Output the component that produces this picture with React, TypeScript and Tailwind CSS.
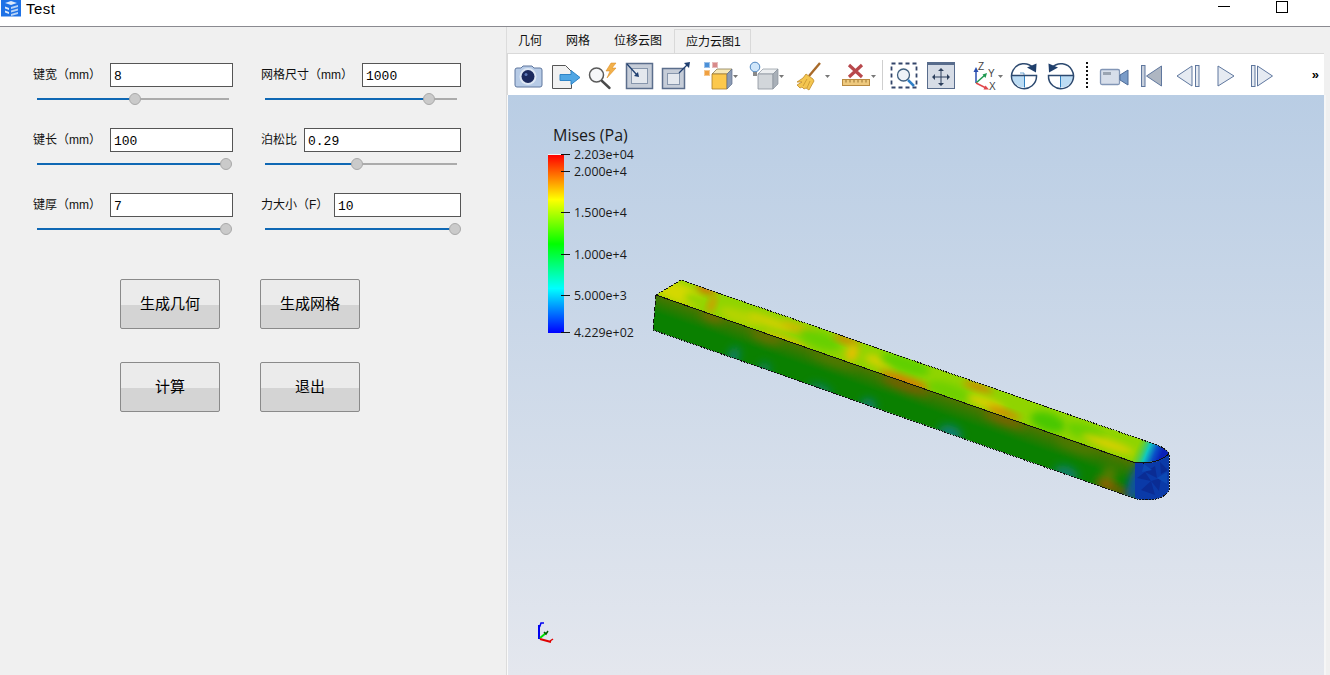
import React from "react";

const cjk = "font-['Liberation_Sans','Noto_Sans_CJK_SC',sans-serif]";

const fields = [
  [
    { label: "键宽（mm）", value: "8", pos: 51, inputW: "w-[123px]" },
    { label: "键长（mm）", value: "100", pos: 98.5, inputW: "w-[123px]" },
    { label: "键厚（mm）", value: "7", pos: 98.5, inputW: "w-[123px]" },
  ],
  [
    { label: "网格尺寸（mm）", value: "1000", pos: 85.5, inputW: "w-[99px]" },
    { label: "泊松比", value: "0.29", pos: 48, inputW: "w-[157px]" },
    { label: "力大小（F）", value: "10", pos: 99, inputW: "w-[127px]" },
  ],
];

const Field = ({ label, value, pos, inputW }: { label: string; value: string; pos: number; inputW: string }) => (
  <div className="h-[65px]">
    <div className="flex h-[24px] items-center justify-between">
      <span className={`${cjk} whitespace-nowrap text-[12px] text-[#111]`}>{label}</span>
      <div className={`${inputW} flex h-[24px] items-center border border-[#555] bg-white pl-[3px] pt-[4px] font-['Liberation_Mono',monospace] text-[13px] text-black`}>
        {value}
      </div>
    </div>
    <div className="mx-[4px] mt-[6px] flex h-[12px] w-[192px] items-center">
      <div className="h-[2px] bg-[#0f68b4]" style={{ width: `${pos}%` }} />
      <div className="-mx-[6px] z-10 h-[12px] w-[12px] shrink-0 rounded-full border border-[#a9a9a9] bg-[#cacaca]" />
      <div className="h-[2px] flex-1 bg-[#ababab]" />
    </div>
  </div>
);

const PushButton = ({ text }: { text: string }) => (
  <button className={`${cjk} h-[50px] w-[100px] rounded-[2px] border border-[#8a8a8a] bg-[linear-gradient(#ebebeb_0%,#ebebeb_52%,#d4d4d4_52%,#d4d4d4_100%)] text-[15px] text-black`}>
    {text}
  </button>
);

// icon drawn in screen coordinates, the svg itself sits in the toolbar flow
const Tool = ({ x, w, children }: { x: number; w: number; children: React.ReactNode }) => (
  <svg width={w} height={42} viewBox={`${x} 53 ${w} 42`} className="shrink-0">
    {children}
  </svg>
);

const Drop = ({ x, y }: { x: number; y: number }) => (
  <path d={`M${x} ${y}h5l-2.5 3z`} fill="#777" />
);

const Toolbar = () => (
  <div className="flex h-[42px] w-[817px] items-center border-l border-t border-[#d9d9d9] bg-white pl-[1px]">
    <Tool x={509} w={38}>
      <path d="M515 69a2 2 0 0 1 2-2h4l2-2h9l2 2h6a2 2 0 0 1 2 2v15a2 2 0 0 1-2 2h-23a2 2 0 0 1-2-2z" fill="#b7cbe6" stroke="#5f779e" />
      <circle cx="528" cy="75.500" r="8.500" fill="#dfe8f4" />
      <circle cx="528" cy="75.500" r="6.500" fill="#1c2a5e" />
      <circle cx="526" cy="73.500" r="1.500" fill="#5f7ab8" />
    </Tool>
    <Tool x={547} w={36}>
      <path d="M552.500 64.500h13l6 6v17h-19z" fill="#f1f1f1" stroke="#555" />
      <path d="M560 73.500h11v-4l9 7-9 7v-4h-11z" fill="#4fa6e4" stroke="#2f84c6" />
    </Tool>
    <Tool x={583} w={37}>
      <circle cx="596.500" cy="74" r="7" fill="#f6f7f9" stroke="#5a5a5a" strokeWidth="1.500" />
      <path d="M602 80l7.500 7" stroke="#4a4a4a" strokeWidth="2.400" strokeLinecap="round" />
      <path d="M611 62l-5 8h4l-3 7 9-10h-4l4-5z" fill="#f2b04a" stroke="#d8861a" strokeWidth=".5" />
    </Tool>
    <Tool x={620} w={38}>
      <rect x="626.500" y="62.500" width="26" height="25" fill="#c6cdd8" stroke="#5b6e8c" strokeWidth="1.500" />
      <rect x="631.500" y="67.500" width="16" height="15" fill="#e4e8ee" stroke="#8796ac" />
      <path d="M627 63l10 11" stroke="#1f3f70" strokeWidth="1.300" />
      <path d="M639 76l-5-1 4-4z" fill="#1f3f70" />
    </Tool>
    <Tool x={658} w={37}>
      <rect x="662.500" y="67.500" width="22" height="20" fill="#c6cdd8" stroke="#5b6e8c" strokeWidth="1.500" />
      <rect x="667.500" y="72.500" width="12" height="11" fill="#e4e8ee" stroke="#8796ac" />
      <path d="M679 72l9-9" stroke="#1f3f70" strokeWidth="1.300" />
      <path d="M690 61l-1 6-5-5z" fill="#1f3f70" />
    </Tool>
    <Tool x={695} w={50}>
      <rect x="704.500" y="61.500" width="5" height="5" fill="#4a90d8" stroke="#9cc0e8" />
      <rect x="712.500" y="61.500" width="5" height="5" fill="#d88a8a" stroke="#e8bcbc" />
      <rect x="704.500" y="69.500" width="5" height="5" fill="#f0a040" stroke="#f5c890" />
      <path d="M717 68h15l-5 5h-15z" fill="#f6e8b8" stroke="#7a6a40" strokeWidth=".7" />
      <path d="M712 73h15v15h-15z" fill="#fcc84c" stroke="#a87c28" strokeWidth=".8" />
      <path d="M727 73l5-5v15l-5 5z" fill="#8a9ab4" stroke="#5f6f8a" strokeWidth=".7" />
      <Drop x={733} y={74} />
    </Tool>
    <Tool x={745} w={45}>
      <circle cx="755" cy="66" r="4.800" fill="#cfe6fa" stroke="#4f86c0" />
      <rect x="753" y="71" width="4" height="4" fill="#8a8a8a" />
      <path d="M763 68h15l-5 5h-15z" fill="#eceef0" stroke="#8a929c" strokeWidth=".7" />
      <path d="M758 73h15v15h-15z" fill="#d2d6da" stroke="#8a929c" strokeWidth=".8" />
      <path d="M773 73l5-5v15l-5 5z" fill="#a9b0b8" stroke="#8a929c" strokeWidth=".7" />
      <Drop x={779} y={74} />
    </Tool>
    <Tool x={790} w={46}>
      <path d="M820 62l-11 13" stroke="#a86a2a" strokeWidth="2.400" />
      <path d="M806 73l7 5 1 2-5 9-3-2-2 1-2-2-2 1-2-2-1-1 5-3-5 0 6-4z" fill="#f4c650" stroke="#c08c28" strokeWidth=".8" />
      <path d="M807 78l-4 7M810 80l-3 7" stroke="#c08c28" strokeWidth=".7" />
      <Drop x={825} y={74} />
    </Tool>
    <Tool x={836} w={44}>
      <path d="M849 64l13 12M862 64l-13 12" stroke="#b8484c" strokeWidth="3.200" />
      <rect x="842.500" y="78.500" width="27" height="6" fill="#eec97e" stroke="#b88a40" />
      <path d="M846 79v2.500M850 79v2.500M854 79v2.500M858 79v2.500M862 79v2.500M866 79v2.500" stroke="#9a7430" />
      <Drop x={871} y={74} />
    </Tool>
    <div className="mx-[1.500px] h-[30px] w-[1px] shrink-0 bg-[#cfcfcf]" />
    <Tool x={884} w={39}>
      <rect x="891.500" y="62.500" width="25" height="24" fill="none" stroke="#33456a" strokeWidth="1.800" strokeDasharray="4 3" />
      <circle cx="903.500" cy="74" r="6" fill="#eef3f8" stroke="#40607f" strokeWidth="1.300" />
      <path d="M908 79l6 6" stroke="#2f80c8" strokeWidth="2.500" />
    </Tool>
    <Tool x={923} w={36}>
      <rect x="927.500" y="61.500" width="27" height="26" fill="#d6dce6" stroke="#586c8c" />
      <rect x="927" y="61" width="28" height="3" fill="#586c8c" />
      <path d="M941 70v12M935 76h12" stroke="#2c3f5c" strokeWidth="1" />
      <path d="M941 67l3 3h-6zM941 85l3-3h-6zM932 76l3-3v6zM950 76l-3-3v6z" fill="#2c3f5c" />
    </Tool>
    <Tool x={959} w={47}>
      <path d="M976 82V69" stroke="#2a4fb0" strokeWidth="1.500" />
      <path d="M976 66l2.500 5h-5z" fill="#2a4fb0" />
      <path d="M976 82l9-8" stroke="#1f9a50" strokeWidth="1.500" />
      <path d="M987 72l-1.500 5-3-3.500z" fill="#1f9a50" />
      <path d="M976 82l10 5" stroke="#e0484c" strokeWidth="1.500" />
      <path d="M989 88.500l-5.500 0 2-4z" fill="#e0484c" />
      <text x="978" y="69" fontSize="10" fill="#444" fontFamily="Liberation Sans">Z</text>
      <text x="988" y="76" fontSize="10" fill="#444" fontFamily="Liberation Sans">Y</text>
      <text x="989" y="89" fontSize="10" fill="#444" fontFamily="Liberation Sans">X</text>
      <Drop x={998} y={74} />
    </Tool>
    <Tool x={1006} w={36}>
      <path d="M1012 74.500h12v12a12 12 0 0 1-12-12z" fill="#bcdcf4" />
      <path d="M1024.500 74.500v12" stroke="#2f80c0" strokeWidth="1" />
      <path d="M1020 72h4v3" stroke="#2f80c0" strokeWidth=".7" fill="none" />
      <path d="M1033 66.500a12.500 12.500 0 1 0 3.500 8h-25" fill="none" stroke="#2d4a70" strokeWidth="1.500" />
      <path d="M1036 71.500l-9-5 9.500-4z" fill="#1f3f6c" />
    </Tool>
    <Tool x={1042} w={37}>
      <path d="M1073 74.500h-12v12a12 12 0 0 0 12-12z" fill="#bcdcf4" />
      <path d="M1060.500 74.500v12" stroke="#2f80c0" strokeWidth="1" />
      <path d="M1052 66.500a12.500 12.500 0 1 1-3.500 8h25" fill="none" stroke="#2d4a70" strokeWidth="1.500" />
      <path d="M1049 71.500l9-5-9.500-4z" fill="#1f3f6c" />
    </Tool>
    <Tool x={1079} w={16}>
      <path d="M1087 61v26" stroke="#111" strokeWidth="2" strokeDasharray="2 2" />
    </Tool>
    <Tool x={1095} w={38}>
      <rect x="1100.500" y="68.500" width="19" height="15" rx="1.500" fill="#d7deea" stroke="#8296b6" strokeWidth="1.300" />
      <rect x="1103" y="71" width="8" height="3" fill="#9aa4b2" />
      <path d="M1120 74l8-5v15l-8-5z" fill="#7a9cc8" stroke="#4e6c98" />
    </Tool>
    <Tool x={1133} w={36}>
      <rect x="1141.500" y="64.500" width="3.500" height="21" fill="#c8d0dc" stroke="#5f779e" />
      <path d="M1161.500 65v20l-15-10z" fill="#aeb6c2" stroke="#5f779e" />
    </Tool>
    <Tool x={1169} w={38}>
      <path d="M1192 65v20l-15-10z" fill="#e6ebf2" stroke="#5f779e" />
      <rect x="1195.500" y="64.500" width="3.500" height="21" fill="#e6ebf2" stroke="#5f779e" />
    </Tool>
    <Tool x={1207} w={37}>
      <path d="M1218 65v20l16-10z" fill="#e6ebf2" stroke="#5f779e" />
    </Tool>
    <Tool x={1244} w={36}>
      <rect x="1251.500" y="64.500" width="3.500" height="21" fill="#e6ebf2" stroke="#5f779e" />
      <path d="M1257.500 65v20l15-10z" fill="#e6ebf2" stroke="#5f779e" />
    </Tool>
    <span className="ml-auto mr-[5px] font-['Liberation_Sans',sans-serif] text-[13px] font-bold leading-none text-black">»</span>
  </div>
);

const ticks = [
  { y: 154, label: "2.203e+04" },
  { y: 171, label: "2.000e+4" },
  { y: 212, label: "1.500e+4" },
  { y: 254, label: "1.000e+4" },
  { y: 295, label: "5.000e+3" },
  { y: 332, label: "4.229e+02" },
];

// blurred blobs over the beam faces: [cx, cy, rx, ry, colour]
const topBlobs: [number, number, number, number, string][] = [
  [678, 293, 26, 10, "#d4d800"],
  [696, 300, 12, 5, "#8ed400"],
  [706, 289, 10, 4, "#e06808"],
  [712, 304, 3, 10, "#e09000"],
  [740, 317, 22, 7, "#b4d400"],
  [770, 322, 24, 5, "#d0d000"],
  [785, 342, 26, 4, "#e0c000"],
  [800, 329, 20, 3, "#e4b000"],
  [820, 340, 22, 8, "#68d000"],
  [846, 340, 14, 3, "#e07800"],
  [852, 353, 6, 9, "#e4c000"],
  [880, 362, 16, 5, "#d8d000"],
  [905, 364, 26, 8, "#60d000"],
  [905, 381, 28, 4, "#e07000"],
  [950, 392, 24, 8, "#70d000"],
  [978, 387, 16, 3, "#e07800"],
  [986, 403, 20, 5, "#d8d000"],
  [1004, 413, 18, 3, "#e07800"],
  [1048, 422, 18, 9, "#48c800"],
  [1085, 432, 20, 7, "#68d000"],
  [1108, 444, 28, 4, "#e0d000"],
];

const frontBlobs: [number, number, number, number, string][] = [
  [712, 317, 12, 4, "#7a6a00"],
  [766, 337, 16, 5, "#6a7000"],
  [833, 361, 24, 3, "#5c7800"],
  [905, 386, 26, 3, "#9a5000"],
  [1004, 420, 22, 3, "#9a5800"],
  [1075, 447, 20, 3, "#587a00"],
  [1108, 478, 8, 12, "#587a00"],
  [1108, 486, 14, 2.500, "#d04000"],
  [1124, 493, 8, 2.500, "#d03000"],
  [733, 358, 6, 12, "#0a7e60"],
  [764, 370, 6, 8, "#0a7e58"],
  [820, 390, 12, 6, "#0a7e58"],
  [868, 406, 8, 8, "#0a7e68"],
  [950, 434, 12, 9, "#0a7e70"],
  [1066, 474, 12, 8, "#0a7e68"],
  [1136, 482, 7, 22, "#0a50a8"],
];

const Viewport = () => (
  <svg viewBox="508 95 816 580" className="h-full w-full">
    <defs>
      <linearGradient id="scale" x1="0" y1="0" x2="0" y2="1">
        <stop offset="0" stopColor="#ff0000" />
        <stop offset="0.25" stopColor="#ffff00" />
        <stop offset="0.5" stopColor="#00ff00" />
        <stop offset="0.75" stopColor="#00ffff" />
        <stop offset="1" stopColor="#0000ff" />
      </linearGradient>
      <filter id="soft" x="-60%" y="-60%" width="220%" height="220%">
        <feGaussianBlur stdDeviation="3.500" />
      </filter>
      <filter id="softer" x="-80%" y="-120%" width="260%" height="340%">
        <feGaussianBlur stdDeviation="4.500" />
      </filter>
      <clipPath id="topFace">
        <path d="M656 295L681 280L1157 445Q1167 449 1169 454Q1160 464 1133 462Z" />
      </clipPath>
      <clipPath id="frontFace">
        <path d="M656 295L1137 463L1137 499L653 330Z" />
      </clipPath>
      <linearGradient id="corner" gradientUnits="userSpaceOnUse" x1="1136" y1="448" x2="1160" y2="458">
        <stop offset="0" stopColor="#40c840" stopOpacity="0" />
        <stop offset="0.45" stopColor="#10c8c0" />
        <stop offset="0.75" stopColor="#0a50c8" />
        <stop offset="1" stopColor="#0a20b8" />
      </linearGradient>
      <linearGradient id="olive" gradientUnits="userSpaceOnUse" x1="800" y1="345" x2="789" y2="376">
        <stop offset="0" stopColor="#6a7000" stopOpacity=".7" />
        <stop offset="0.55" stopColor="#6a7000" stopOpacity="0" />
      </linearGradient>
    </defs>

    <text x="553" y="141" fontSize="16" fill="#1a1a1a" fontFamily="Open Sans, sans-serif">Mises (Pa)</text>
    <rect x="548" y="154" width="16" height="1" fill="#f4f4f4" />
    <rect x="548" y="155" width="16" height="178" fill="url(#scale)" />
    {ticks.map((t) => (
      <g key={t.y}>
        <rect x="561" y={t.y} width="9" height="1" fill="#111" />
        <text x="574" y={t.y + 4.500} fontSize="12.400" fill="#1a1a1a" fontFamily="Open Sans, sans-serif">{t.label}</text>
      </g>
    ))}

    {/* beam: top face */}
    <path d="M656 295L681 280L1157 445Q1167 449 1169 454Q1160 464 1133 462Z" fill="#90d400" />
    <g clipPath="url(#topFace)">
      {topBlobs.map(([cx, cy, rx, ry, c], i) => (
        <ellipse key={i} cx={cx} cy={cy} rx={rx} ry={ry} fill={c} filter="url(#soft)" transform={`rotate(19 ${cx} ${cy})`} />
      ))}
      <rect x="1125" y="440" width="46" height="26" fill="url(#corner)" />
    </g>
    {/* beam: front face */}
    <path d="M656 295L1137 463L1137 499L653 330Z" fill="#0a8000" />
    <path d="M656 295L1137 463L1137 499L653 330Z" fill="url(#olive)" />
    <g clipPath="url(#frontFace)">
      {frontBlobs.map(([cx, cy, rx, ry, c], i) => (
        <ellipse key={i} cx={cx} cy={cy} rx={rx} ry={ry} fill={c} filter="url(#softer)" transform={`rotate(19 ${cx} ${cy})`} />
      ))}
    </g>
    {/* beam: rounded end */}
    <path d="M1135 462Q1155 466 1169 454V490Q1165 499 1148 500Q1140 500 1135 498Z" fill="#0a3aa8" />
    <path d="M1137 478l8-6 6 9zM1145 472l10-6 2 12zM1151 481l10-3-2 13zM1141 490l10-9 4 14zM1160 462l8 8-7 4z" fill="#0a2c94" />
    <path d="M1157 478l10-6v12zM1144 464l8 6-10 2z" fill="#0c48b4" />

    {/* outlines */}
    <g fill="none" stroke="#111" shapeRendering="crispEdges">
      <path d="M656 295L1133 462Q1155 466 1169 454" strokeWidth="1" />
      <path d="M656 295L681 280L1157 445Q1167 449 1169 454V490Q1165 499 1148 500Q1140 500 1133 498L653 330" strokeWidth="1" strokeDasharray="2 1" />
      <path d="M656 295L653 330" strokeWidth="1" strokeDasharray="4 2" />
    </g>

    {/* axes */}
    <path d="M539 639V625" stroke="#0000f0" strokeWidth="2" />
    <path d="M539 628l1-2 1-3h3" stroke="#0000f0" strokeWidth="1.500" fill="none" />
    <path d="M540 638l6-5" stroke="#00e000" strokeWidth="2" />
    <path d="M544 632l2 2 2-3" stroke="#006000" strokeWidth="1.500" fill="none" />
    <path d="M540 639l11 3" stroke="#e00000" strokeWidth="2" />
    <path d="M550 641l3-2" stroke="#e00000" strokeWidth="1.500" />
  </svg>
);

export default function App() {
  return (
    <div className="flex h-[675px] w-[1330px] flex-col overflow-hidden bg-[#f0f0f0]">
      {/* title bar */}
      <div className="flex h-[27px] shrink-0 items-start border-b border-[#8a8a90] bg-white">
        <svg width="21" height="17" viewBox="0 0 21 17" className="ml-[1px] shrink-0">
          <rect width="20" height="16.500" fill="#1f72e6" />
          <path d="M4 3l6-2 6 2-6 2zM4 6.500l4 1.500v2l-4-1.500zM4 10.500l4 1.500v2l-4-1.500z" fill="#dce9fb" />
          <path d="M10 7l7-2v2l-7 2zM10 10.500l7-2v2l-7 2zM10 14l7-2v2l-7 2z" fill="#b7d3f7" />
        </svg>
        <span className="ml-[4px] font-['Liberation_Sans',sans-serif] text-[15px] leading-[17px] tracking-[0.5px] text-black">Test</span>
        <div className="ml-auto mr-[42px] flex items-start gap-[46px]">
          <div className="mt-[6px] h-[1px] w-[12px] bg-black" />
          <div className="mt-[1px] h-[12px] w-[12px] border border-black" />
        </div>
      </div>

      <div className="flex min-h-0 flex-1">
        {/* parameter panel */}
        <div className="w-[507px] shrink-0 border-r border-[#dcdcdc] pl-[33px] pt-[36px]">
          <div className="flex gap-[28px]">
            {fields.map((col, i) => (
              <div key={i} className="w-[200px]">
                {col.map((f) => (
                  <Field key={f.label} {...f} />
                ))}
              </div>
            ))}
          </div>
          <div className="ml-[87px] mt-[21px] grid w-[240px] grid-cols-2 gap-x-[40px] gap-y-[33px]">
            <PushButton text="生成几何" />
            <PushButton text="生成网格" />
            <PushButton text="计算" />
            <PushButton text="退出" />
          </div>
        </div>

        {/* result panel */}
        <div className="flex min-w-0 flex-1 flex-col">
          <div className={`${cjk} -ml-[1px] flex h-[26px] shrink-0 items-end text-[12px] text-[#111]`}>
            <div className="flex h-[24px] items-center px-[12px]">几何</div>
            <div className="flex h-[24px] items-center px-[12px]">网格</div>
            <div className="flex h-[24px] items-center px-[12px]">位移云图</div>
            <div className="flex h-[24px] items-center border border-b-0 border-[#d9d9d9] pl-[11px] pr-[9px]">应力云图1</div>
          </div>
          <Toolbar />
          <div className="w-[819px] flex-1 border-l border-r-2 border-l-[#fafafa] border-r-[#f6f6f6] bg-[linear-gradient(#b9cde4,#e4e7ee)]">
            <Viewport />
          </div>
        </div>
      </div>
    </div>
  );
}
